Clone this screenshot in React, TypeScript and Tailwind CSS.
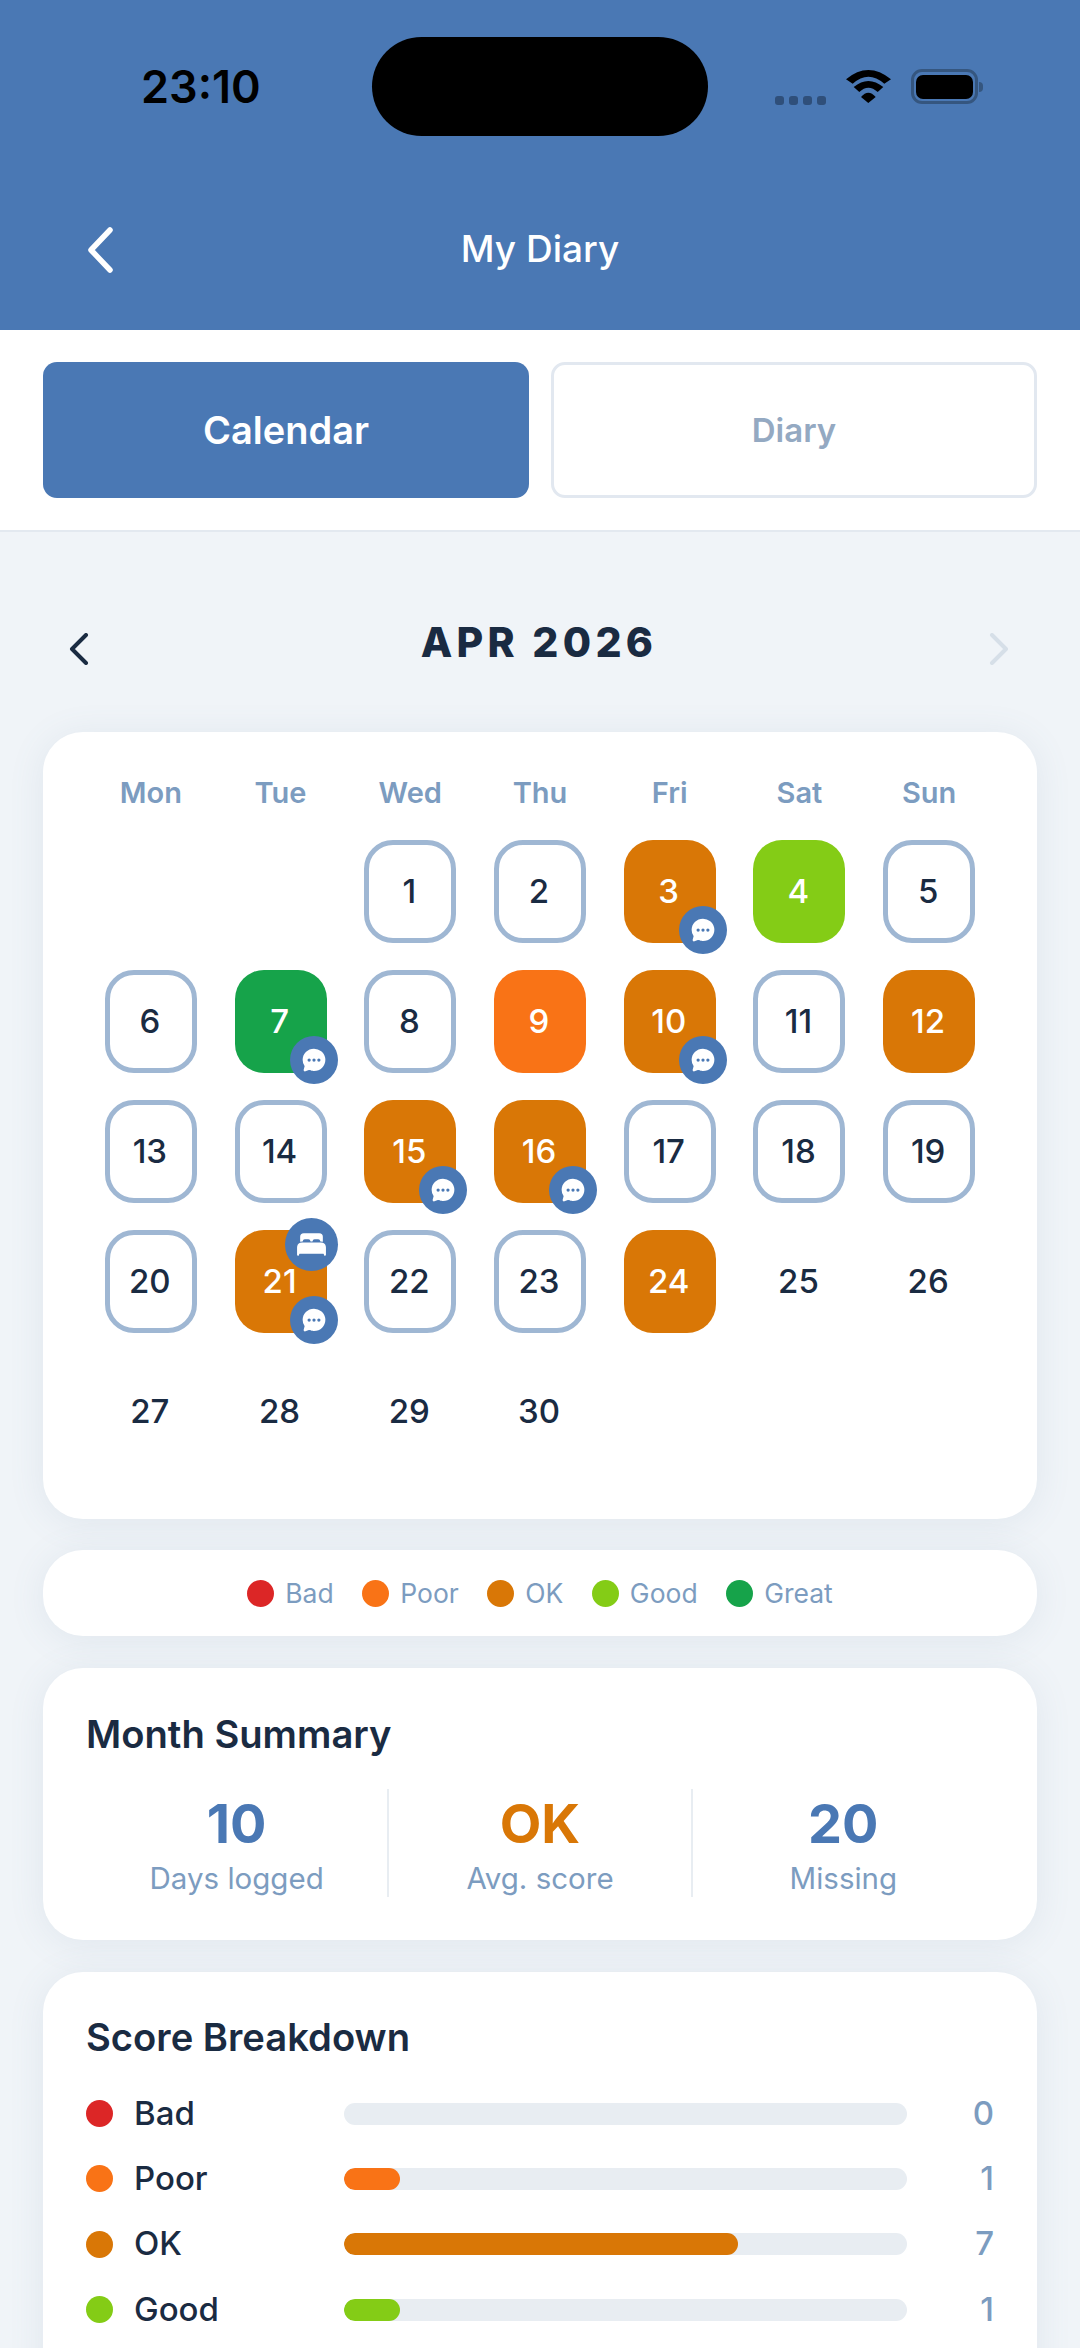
import { IoBed, IoChatbubbleEllipses } from "react-icons/io5";

const BLUE = "#4a78b4";

type Score = "ok" | "poor" | "good" | "great" | "none";

interface Day {
  n: number;
  score?: Score;
  note?: boolean;
  sleep?: boolean;
  plain?: boolean;
}

const scoreClass: Record<Score, string> = {
  ok: "bg-[#d97706] text-white",
  poor: "bg-[#f97316] text-white",
  good: "bg-[#84cc16] text-white",
  great: "bg-[#16a34a] text-white",
  none: "bg-white border-[5px] border-[#9fb7d3] text-[#1a2b42]",
};

const days: (Day | null)[] = [
  null,
  null,
  { n: 1, score: "none" },
  { n: 2, score: "none" },
  { n: 3, score: "ok", note: true },
  { n: 4, score: "good" },
  { n: 5, score: "none" },
  { n: 6, score: "none" },
  { n: 7, score: "great", note: true },
  { n: 8, score: "none" },
  { n: 9, score: "poor" },
  { n: 10, score: "ok", note: true },
  { n: 11, score: "none" },
  { n: 12, score: "ok" },
  { n: 13, score: "none" },
  { n: 14, score: "none" },
  { n: 15, score: "ok", note: true },
  { n: 16, score: "ok", note: true },
  { n: 17, score: "none" },
  { n: 18, score: "none" },
  { n: 19, score: "none" },
  { n: 20, score: "none" },
  { n: 21, score: "ok", note: true, sleep: true },
  { n: 22, score: "none" },
  { n: 23, score: "none" },
  { n: 24, score: "ok" },
  { n: 25, plain: true },
  { n: 26, plain: true },
  { n: 27, plain: true },
  { n: 28, plain: true },
  { n: 29, plain: true },
  { n: 30, plain: true },
];

const legend = [
  { label: "Bad", color: "bg-[#dc2626]" },
  { label: "Poor", color: "bg-[#f97316]" },
  { label: "OK", color: "bg-[#d97706]" },
  { label: "Good", color: "bg-[#84cc16]" },
  { label: "Great", color: "bg-[#16a34a]" },
];

const breakdown = [
  { label: "Bad", color: "bg-[#dc2626]", count: 0, pct: 0 },
  { label: "Poor", color: "bg-[#f97316]", count: 1, pct: 10 },
  { label: "OK", color: "bg-[#d97706]", count: 7, pct: 70 },
  { label: "Good", color: "bg-[#84cc16]", count: 1, pct: 10 },
];

function BackChevron() {
  return (
    <svg width="28" height="46" viewBox="0 0 28 46" fill="none">
      <polyline points="24,3 5,23 24,43" stroke="#ffffff" strokeWidth={5.5} strokeLinecap="round" strokeLinejoin="round" />
    </svg>
  );
}

function MonthChevron({ dir, color }: { dir: "left" | "right"; color: string }) {
  const pts = dir === "left" ? "17,2 3,16 17,30" : "3,2 17,16 3,30";
  return (
    <svg width="20" height="32" viewBox="0 0 20 32" fill="none" className="mt-[33px]">
      <polyline points={pts} stroke={color} strokeWidth={4} strokeLinecap="round" strokeLinejoin="round" />
    </svg>
  );
}

function StatusIcons() {
  return (
    <div className="flex items-center pl-[67px]">
      <div className="flex gap-[5px] pt-[28px]">
        {[0, 1, 2, 3].map((i) => (
          <span key={i} className="h-[9px] w-[9px] rounded-[3px] bg-[#2f4f7a]" />
        ))}
      </div>
      <svg width="45" height="33" viewBox="0 0 45 33" className="ml-[20px]">
        <path d="M0 9.3 Q22.3 -9.3 45 9.3 L38.3 13.7 Q22.3 -0.3 6.7 13.7 Z" fill="#000" />
        <path d="M7.7 17 Q22.3 5 37.3 17 L31.7 22 Q22.3 13.4 13.3 22 Z" fill="#000" />
        <path d="M15 27 Q22.3 18.4 29.7 27 L22.3 33 Z" fill="#000" />
      </svg>
      <div className="ml-[20px] flex items-center">
        <div className="flex h-[35px] w-[67px] items-center justify-center rounded-[11px] border-[3px] border-[#35567f]">
          <div className="h-[24px] w-[57px] rounded-[7px] bg-black" />
        </div>
        <div className="ml-[1px] h-[10px] w-[4px] rounded-r-full bg-[#35567f]" />
      </div>
    </div>
  );
}

function Badge({ kind }: { kind: "note" | "sleep" }) {
  if (kind === "sleep") {
    return (
      <span
        className="absolute right-[-11px] top-[-12px] flex h-[53px] w-[53px] items-center justify-center rounded-full"
        style={{ background: BLUE }}
      >
        <IoBed className="text-white" size={33} />
      </span>
    );
  }
  return (
    <span
      className="absolute bottom-[-11px] right-[-11px] flex h-[48px] w-[48px] items-center justify-center rounded-full"
      style={{ background: BLUE }}
    >
      <IoChatbubbleEllipses className="text-white" size={26} />
    </span>
  );
}

function DayCell({ day }: { day: Day | null }) {
  if (!day) return <div className="h-[130px]" />;
  return (
    <div className="flex h-[130px] items-start justify-center">
      <div
        className={
          "relative flex h-[103px] w-[92px] items-center justify-center rounded-[29px] text-[33px] font-medium " +
          (day.plain ? "text-[#1a2b42]" : scoreClass[day.score ?? "none"])
        }
      >
        <span className="pr-[2px]">{day.n}</span>
        {day.note && <Badge kind="note" />}
        {day.sleep && <Badge kind="sleep" />}
      </div>
    </div>
  );
}

function Stat({ value, label, tone }: { value: string; label: string; tone: string }) {
  return (
    <div className="flex h-[108px] flex-1 flex-col items-center">
      <span className={"mt-[3px] text-[54px] font-bold leading-[64px] " + tone}>{value}</span>
      <span className="mt-[4px] text-[29.5px] leading-[36px] text-[#7c9cc0]">{label}</span>
    </div>
  );
}

export default function App() {
  return (
    <div className="flex h-[2348px] w-[1080px] flex-col overflow-hidden bg-[#f0f4f8] font-['Inter',sans-serif] text-[#1a2b42]">
      <header className="h-[330px] shrink-0 pt-[37px]" style={{ background: BLUE }}>
        <div className="grid h-[99px] grid-cols-[372px_336px_1fr] items-center">
          <span className="pl-[141px] text-[45px] font-semibold leading-none text-black">23:10</span>
          <div className="h-[99px] rounded-[50px] bg-black" />
          <StatusIcons />
        </div>
        <div className="mt-[87px] grid h-[50px] grid-cols-[1fr_auto_1fr] items-center pl-[86px]">
          <BackChevron />
          <h1 className="-mt-[2px] pr-[86px] text-[37px] font-medium text-white">My Diary</h1>
          <span />
        </div>
      </header>

      <nav className="flex h-[202px] shrink-0 gap-[22px] border-b-[2px] border-[#e3e9f0] bg-white px-[43px] pt-[32px]">
        <button className="h-[136px] w-[486px] rounded-[14px] text-[38px] font-semibold text-white" style={{ background: BLUE }}>
          Calendar
        </button>
        <button className="h-[136px] w-[486px] rounded-[14px] border-[3px] border-[#e2e8f0] bg-white pt-[2px] text-[33px] font-semibold text-[#94a9c2]">
          Diary
        </button>
      </nav>

      <main className="flex flex-col px-[43px]">
        <div className="flex h-[200px] items-center justify-between pl-[26px] pr-[28px]">
          <MonthChevron dir="left" color="#1a2b42" />
          <h2 className="pt-[22px] text-[41px] font-extrabold tracking-[4.3px]">APR 2026</h2>
          <MonthChevron dir="right" color="#d6dfe8" />
        </div>

        <section className="h-[787px] rounded-[40px] bg-white px-[43px] pt-[43px] shadow-[0_4px_36px_rgba(100,125,155,0.11)]">
          <div className="grid grid-cols-7">
            {["Mon", "Tue", "Wed", "Thu", "Fri", "Sat", "Sun"].map((d) => (
              <div key={d} className="h-[65px] text-center text-[29px] font-semibold leading-[36px] text-[#7c9cc0]">
                {d}
              </div>
            ))}
          </div>
          <div className="grid grid-cols-7">
            {days.map((d, i) => (
              <DayCell key={i} day={d} />
            ))}
          </div>
        </section>

        <section className="mt-[31px] flex h-[86px] items-center justify-center gap-[28.5px] rounded-[40px] bg-white shadow-[0_4px_36px_rgba(100,125,155,0.11)]">
          {legend.map((l) => (
            <div key={l.label} className="flex items-center gap-[11px]">
              <span className={"h-[27px] w-[27px] rounded-full " + l.color} />
              <span className="text-[26.5px] leading-none text-[#7c9cc0]">{l.label}</span>
            </div>
          ))}
        </section>

        <section className="mt-[32px] h-[272px] rounded-[40px] bg-white px-[43px] pt-[44px] shadow-[0_4px_36px_rgba(100,125,155,0.11)]">
          <h3 className="text-[38.2px] font-semibold leading-[44px]">Month Summary</h3>
          <div className="mt-[33px] flex">
            <Stat value="10" label="Days logged" tone="text-[#4a78b4]" />
            <div className="h-[108px] w-[2px] bg-[#e8edf2]" />
            <Stat value="OK" label="Avg. score" tone="text-[#d97706]" />
            <div className="h-[108px] w-[2px] bg-[#e8edf2]" />
            <Stat value="20" label="Missing" tone="text-[#4a78b4]" />
          </div>
        </section>

        <section className="mt-[32px] h-[500px] rounded-[40px] bg-white px-[43px] pt-[43px] shadow-[0_4px_36px_rgba(100,125,155,0.11)]">
          <h3 className="text-[38.2px] font-semibold leading-[44px]">Score Breakdown</h3>
          <div className="mt-[22px] flex flex-col">
            {breakdown.map((b) => (
              <div key={b.label} className="flex h-[65.3px] items-center">
                <span className={"h-[27px] w-[27px] rounded-full " + b.color} />
                <span className="ml-[21px] w-[210px] text-[33px] font-medium">{b.label}</span>
                <div className="h-[22px] w-[563px] overflow-hidden rounded-full bg-[#e8edf2]">
                  <div className={"h-full rounded-full " + b.color} style={{ width: `${b.pct}%` }} />
                </div>
                <span className="flex-1 text-right text-[33px] font-medium text-[#7c9cc0]">{b.count}</span>
              </div>
            ))}
          </div>
        </section>
      </main>
    </div>
  );
}
